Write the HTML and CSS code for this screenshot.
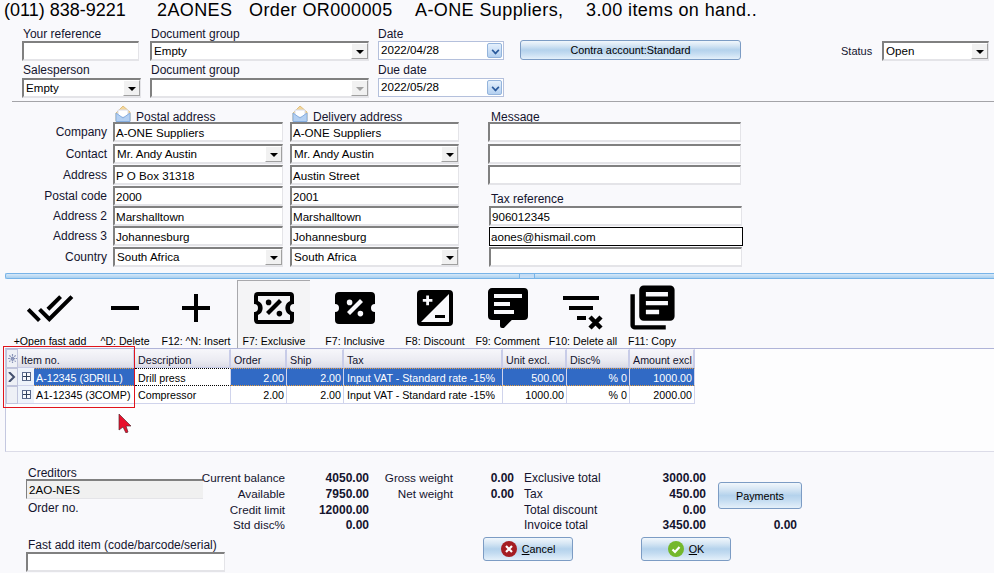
FILE: index.html
```html
<!DOCTYPE html>
<html lang="en">
<head>
<meta charset="utf-8">
<title>Order OR000005</title>
<link rel="stylesheet" href="styles.css">
</head>
<body>
<div class="page">
  <h1 class="title"><span class="phone">(011) 838-9221</span><span>2AONES</span><span>Order OR000005</span><span>A-ONE Suppliers,</span><span>3.00 items on hand..</span></h1>

  <section class="top-form">
    <div class="cell c-ref"><label>Your reference</label><div class="field"></div></div>
    <div class="cell c-group"><label>Document group</label><div class="field select"><span>Empty</span><i class="arrow"></i></div></div>
    <div class="cell c-date"><label>Date</label><div class="date"><span>2022/04/28</span><i class="date-btn"></i></div></div>
    <button class="btn contra">Contra account:Standard</button>
    <div class="status"><label>Status</label><div class="field select status-select"><span>Open</span><i class="arrow"></i></div></div>
    <div class="cell c-sales second"><label>Salesperson</label><div class="field select"><span>Empty</span><i class="arrow"></i></div></div>
    <div class="cell c-group second"><label>Document group</label><div class="field select"><span></span><i class="arrow off"></i></div></div>
    <div class="cell c-date second"><label>Due date</label><div class="date"><span>2022/05/28</span><i class="date-btn"></i></div></div>
  </section>

  <hr class="rule">

  <section class="address">
    <div></div>
    <div class="addr-head"><svg class="env" viewBox="0 0 16 17"><path d="M1 8 8 1l7 6v9H1z" fill="#f4d79c" stroke="#e0c080"/><path d="M3 5h10v7H3z" fill="#fff" stroke="#d8dcec"/><path d="M1 8l7 5 7-5v8.500H1z" fill="#b4d0f2" stroke="#86aee0"/></svg><span>Postal address</span></div>
    <div class="addr-head"><svg class="env" viewBox="0 0 16 17"><path d="M1 8 8 1l7 6v9H1z" fill="#f4d79c" stroke="#e0c080"/><path d="M3 5h10v7H3z" fill="#fff" stroke="#d8dcec"/><path d="M1 8l7 5 7-5v8.500H1z" fill="#b4d0f2" stroke="#86aee0"/></svg><span>Delivery address</span></div>
    <div class="addr-head msg-head"><span>Message</span></div>

    <label class="row-label">Company</label>
    <div class="field">A-ONE Suppliers</div><div class="field">A-ONE Suppliers</div><div class="field"></div>
    <label class="row-label">Contact</label>
    <div class="field select"><span>Mr. Andy Austin</span><i class="arrow"></i></div><div class="field select"><span>Mr. Andy Austin</span><i class="arrow"></i></div><div class="field"></div>
    <label class="row-label">Address</label>
    <div class="field">P O Box 31318</div><div class="field">Austin Street</div><div class="field"></div>
    <label class="row-label">Postal code</label>
    <div class="field">2000</div><div class="field">2001</div><div class="tax-label">Tax reference</div>
    <label class="row-label">Address 2</label>
    <div class="field">Marshalltown</div><div class="field">Marshalltown</div><div class="field wide">906012345</div>
    <label class="row-label">Address 3</label>
    <div class="field">Johannesburg</div><div class="field">Johannesburg</div><div class="field wide focus">aones@hismail.com</div>
    <label class="row-label">Country</label>
    <div class="field select"><span>South Africa</span><i class="arrow"></i></div><div class="field select"><span>South Africa</span><i class="arrow"></i></div><div class="field wide"></div>
  </section>

  <div class="splitter"><i class="grip"></i></div>

  <nav class="toolbar">
    <div class="tool"><svg viewBox="0 0 24 24"><path d="M.41 13.41 6 19l1.41-1.42L1.83 12M22.24 5.58 11.66 16.170 7.500 12l-1.430 1.410L11.660 19l12-12M18 7l-1.410-1.410-6.350 6.340 1.420 1.410z"/></svg><span>+Open fast add</span></div>
    <div class="tool"><svg viewBox="0 0 24 24"><path d="M19 13H5v-2h14z"/></svg><span>^D: Delete</span></div>
    <div class="tool"><svg viewBox="0 0 24 24"><path d="M19 13h-6v6h-2v-6H5v-2h6V5h2v6h6z"/></svg><span>F12: ^N: Insert</span></div>
    <div class="tool tool-active"><svg viewBox="0 0 24 24"><path fill-rule="evenodd" d="M4 4h16a2 2 0 0 1 2 2v4a2 2 0 0 0 0 4v4a2 2 0 0 1-2 2H4a2 2 0 0 1-2-2v-4a2 2 0 0 0 0-4V6a2 2 0 0 1 2-2zm0 2v2.500a3.800 3.800 0 0 1 0 7V18h16v-2.500a3.800 3.800 0 0 1 0-7V6z"/><path d="m14.500 7.500 1.500 1.500-6.500 6.500L8 14zM9.300 7.800a1.400 1.400 0 1 1 0 2.800 1.400 1.400 0 0 1 0-2.800zM14.700 13.400a1.400 1.400 0 1 1 0 2.800 1.400 1.400 0 0 1 0-2.800z"/></svg><span>F7: Exclusive</span></div>
    <div class="tool"><svg viewBox="0 0 24 24"><path fill-rule="evenodd" d="M4 4h16a2 2 0 0 1 2 2v4a2 2 0 0 0 0 4v4a2 2 0 0 1-2 2H4a2 2 0 0 1-2-2v-4a2 2 0 0 0 0-4V6a2 2 0 0 1 2-2zm10.500 3.500L8 14l1.500 1.500L16 9zM9.300 7.800a1.400 1.400 0 1 0 0 2.800 1.400 1.400 0 0 0 0-2.800zm5.400 5.600a1.400 1.400 0 1 0 0 2.800 1.400 1.400 0 0 0 0-2.800z"/></svg><span>F7: Inclusive</span></div>
    <div class="tool"><svg viewBox="0 0 24 24"><path fill-rule="evenodd" d="M19 3H5a2 2 0 0 0-2 2v14a2 2 0 0 0 2 2h14a2 2 0 0 0 2-2V5a2 2 0 0 0-2-2zm0 16H5L19 5zM7.600 5.800h1.400v1.700h1.700v1.400H9v1.700H7.600V8.900H5.900V7.500h1.700zM12 15.500h5v1.500h-5z"/></svg><span>F8: Discount</span></div>
    <div class="tool"><svg viewBox="0 0 24 24"><path d="M9 22a1 1 0 0 1-1-1v-3H4a2 2 0 0 1-2-2V4c0-1.110.9-2 2-2h16a2 2 0 0 1 2 2v12a2 2 0 0 1-2 2h-6.100l-3.700 3.710c-.2.190-.45.290-.7.290H9M5 5v2h14V5H5m0 4v2h8V9H5m0 4v2h10v-2H5z"/></svg><span>F9: Comment</span></div>
    <div class="tool"><svg viewBox="0 0 48 48"><path d="M4 12h36v4H4zM10 22h24v4H10zM18 32h9v4h-9z"/><path d="M31 33l11 11M42 33 31 44" fill="none" stroke="#000" stroke-width="4.500"/></svg><span>F10: Delete all</span></div>
    <div class="tool tool-copy"><svg viewBox="0 0 24 24"><path d="M4 6H2v14a2 2 0 0 0 2 2h14v-2H4V6m16-4H8a2 2 0 0 0-2 2v12a2 2 0 0 0 2 2h12a2 2 0 0 0 2-2V4a2 2 0 0 0-2-2m-1 9H9V9h10v2m-4 4H9v-2h6v2m4-8H9V5h10v2z"/></svg><span>F11: Copy</span></div>
  </nav>

  <section class="grid-wrap">
    <table class="grid">
      <colgroup>
        <col class="w-ind"><col class="w-exp"><col class="w-item"><col class="w-desc"><col class="w-order"><col class="w-ship"><col class="w-tax"><col class="w-unit"><col class="w-disc"><col class="w-amt">
      </colgroup>
      <thead>
        <tr><th class="ind"><svg class="star" viewBox="0 0 9 9"><path d="M4.500 0v9M0 4.500h9M1.300 1.300l6.400 6.400M7.700 1.300 1.300 7.700" stroke="#8a94b8" stroke-width="1.200" stroke-dasharray="2 .6"/></svg></th><th colspan="2">Item no.</th><th>Description</th><th>Order</th><th>Ship</th><th>Tax</th><th>Unit excl.</th><th>Disc%</th><th>Amount excl</th></tr>
      </thead>
      <tbody>
        <tr class="sel"><td class="ind"><svg class="chev" viewBox="0 0 8 10"><path d="M1 0l5 5-5 5" fill="none" stroke="#44506e" stroke-width="2"/></svg></td><td class="exp"><i class="plus"></i></td><td class="hi item">A-12345 (3DRILL)</td><td class="dot">Drill press</td><td class="hi num">2.00</td><td class="hi num">2.00</td><td class="hi">Input VAT - Standard rate -15%</td><td class="hi num">500.00</td><td class="hi num">% 0</td><td class="hi num">1000.00</td></tr>
        <tr><td class="ind"></td><td class="exp"><i class="plus"></i></td><td class="item">A1-12345 (3COMP)</td><td>Compressor</td><td class="num">2.00</td><td class="num">2.00</td><td>Input VAT - Standard rate -15%</td><td class="num">1000.00</td><td class="num">% 0</td><td class="num">2000.00</td></tr>
      </tbody>
    </table>
    <div class="red-box"></div>
    <svg class="cursor" viewBox="0 0 14 20"><path d="M1 1v16l4-3 3 6 2-1-2-6h5z" fill="#e8102c" stroke="#5a2a30" stroke-width=".7"/></svg>
  </section>

  <section class="bottom">
    <div class="bottom-left">
      <div class="b-label creditors">Creditors</div>
      <div class="field ro">2AO-NES</div>
      <div class="b-label order-no">Order no.</div>
      <div class="b-label fast-label">Fast add item (code/barcode/serial)</div>
      <div class="field fast"></div>
    </div>
    <div class="bottom-right">
      <div class="summary">
        <span class="k">Current balance</span><b>4050.00</b><span class="k">Gross weight</span><b>0.00</b><span class="l">Exclusive total</span><b>3000.00</b>
        <button class="btn pay">Payments</button>
        <span class="k">Available</span><b>7950.00</b><span class="k">Net weight</span><b>0.00</b><span class="l">Tax</span><b>450.00</b>
        <span class="k">Credit limit</span><b>12000.00</b><span></span><span></span><span class="l">Total discount</span><b>0.00</b>
        <span class="k">Std disc%</span><b>0.00</b><span></span><span></span><span class="l">Invoice total</span><b>3450.00</b><b class="extra">0.00</b>
      </div>
      <div class="actions">
        <button class="btn act"><svg viewBox="0 0 16 16"><circle cx="8" cy="8" r="8" fill="#a51d22"/><path d="M5 5l6 6M11 5l-6 6" stroke="#fff" stroke-width="2.200"/></svg><span><u>C</u>ancel</span></button>
        <button class="btn act"><svg viewBox="0 0 16 16"><circle cx="8" cy="8" r="8" fill="#74b82c"/><path d="M4.500 8.500l2.500 2.500 4.500-5" fill="none" stroke="#fff" stroke-width="2.200"/></svg><span><u>O</u>K</span></button>
      </div>
    </div>
  </section>
</div>
</body>
</html>
```
FILE: styles.css
```css
* { box-sizing: border-box; }
html, body { margin: 0; padding: 0; }
body { background: #f9f9fc; color: #000; font: 12px/14px "Liberation Sans", Arial, sans-serif; }
.page { width: 994px; height: 573px; overflow: hidden; position: relative; }
.title {
  margin: 0; height: 27px; padding: 0 0 0 4px; font: 400 18px/20px "Liberation Sans", Arial, sans-serif;
  display: grid; grid-template-columns: 153px 92px 166px 171px auto; letter-spacing: .4px; white-space: nowrap;
}
.phone { letter-spacing: 0; }

label { color: #14142e; display: block; }

.field {
  height: 20px; background: #fff; padding: 1px 0 0 1px; font-size: 11.6px; line-height: 15px; white-space: nowrap; overflow: hidden;
  border-style: solid; border-width: 2px 1px 2px 2px; border-color: #808080 #e4e4e8 #e4e4e8 #808080;
}
.select { display: flex; justify-content: space-between; padding: 0 0 0 2px; }
.arrow {
  flex: none; width: 17px; height: 16px; background: #f1f1f1; position: relative;
  border: 1px solid; border-color: #fff #a0a0a0 #a0a0a0 #fff;
}
.arrow::after {
  content: ""; position: absolute; left: 4px; top: 6px;
  border-style: solid; border-width: 4px 4px 0 4px; border-color: #000 transparent transparent transparent;
}
.arrow.off::after { border-top-color: #a0a0a0; }

.top-form { display: grid; grid-template-columns: 128px 228px 142px 321px auto; grid-template-rows: 37px 37px; padding-left: 22px; width: 994px; }
.cell label { height: 14px; padding-left: 1px; }
.second label { margin-top: -1px; height: 15px; }
.c-ref .field { width: 117px; }
.c-group .field { width: 219px; }
.c-sales .field { width: 119px; }
.c-date label { padding-left: 0; }
.date {
  display: flex; justify-content: space-between; width: 126px; height: 19px; padding: 0 1px 0 2px; align-items: flex-start;
  background: #fff; border: 1px solid #b4c0dc; font-size: 11.6px; line-height: 15px;
}
.date-btn {
  width: 15px; height: 15px; margin-top: 1px; border: 1px solid #94b4dc; border-radius: 2px; position: relative;
  background: linear-gradient(#e4f0fc, #b4d0f0);
}
.date-btn::after {
  content: ""; position: absolute; left: 3px; top: 3px; width: 5px; height: 5px; margin-left: 1px;
  border: solid #2a5a9c; border-width: 0 2px 2px 0; transform: scale(.8) rotate(45deg);
}
.btn {
  font: 10.8px/14px "Liberation Sans", Arial, sans-serif; color: #000; padding: 0; cursor: default;
  border: 1px solid #7c9cc4; border-radius: 3px;
  background: linear-gradient(#f1f7fc 0, #d6e6f4 25%, #b4d2ec 50%, #c4dcf1 70%, #e4f0fa 100%);
}
.contra { width: 221px; height: 20px; margin-top: 13px; }
.status { display: flex; padding-top: 14px; }
.status label { line-height: 20px; width: 41px; font-size: 11px; }
.status-select { width: 107px; }

.rule { border: 0; height: 1px; background: #a4a4a8; margin: 0 0 0 12px; }

.address {
  display: grid;
  grid-template-columns: 107px 170px 170px 253px; column-gap: 6px;
  grid-template-rows: 20px 22px 21px 21px 20px 20px 21px 20px;
}
.address > :nth-child(4n+3) { margin-left: 1px; }
.address > :nth-child(4n) { margin-left: 23px; width: 253px; }
.row-label { text-align: right; line-height: 21px; }
.addr-head { display: flex; align-items: flex-end; gap: 5px; padding-left: 2px; color: #14142e; line-height: 14px; }
.addr-head span { margin-bottom: -2px; }
.msg-head { padding-left: 3px; }
.env { width: 16px; height: 17px; }
.tax-label { color: #14142e; align-self: end; padding-left: 3px; line-height: 14px; }
.address > .wide { margin-left: 24px; }
.focus { border: 1px solid #000; padding: 1px 0 0 1px; margin-top: 1px; height: 19px; width: 254px !important; }

.splitter {
  height: 6px; margin: 6px 0 0 5px; position: relative; border-radius: 2px 0 0 2px;
  border-top: 1px solid #78b4e8; border-bottom: 1px solid #78b4e8; border-left: 1px solid #78b4e8;
  background: linear-gradient(#d6e8f8, #a8d0f0);
}
.grip { position: absolute; left: 513px; top: -1px; width: 16px; height: 6px; border: 1px solid #78b4e8; background: #c4dcf4; }

.toolbar {
  display: grid; height: 69px; padding: 1px 0 0 12px; font-size: 10.6px;
  grid-template-columns: 76px 74px 75px 73px 90px 70px 75px 76px 62px;
}
.tool { display: flex; flex-direction: column; align-items: center; position: relative; height: 68px; }
.tool svg { width: 48px; height: 48px; margin-top: 4px; flex: none; }
.tool span { white-space: nowrap; margin-top: 2px; line-height: 14px; }
.tool:nth-child(3) { width: 68px; }
.tool-active { background: #f4f4f6; border-top: 1px solid #a8a8ac; border-left: 1px solid #a8a8ac; }
.tool-active svg { margin-top: 3px; }
.tool-copy svg { width: 53px; height: 53px; margin: 1px 0 0; }
.tool-copy span { margin-top: 0; }

.grid-wrap { position: relative; margin-left: 5px; height: 104px; border-top: 1px solid #b0b4d8; border-left: 1px solid #c4c8e0; border-bottom: 1px solid #dcdce8; background: #fdfdfe; font-size: 10.7px; }
.grid { border-collapse: separate; border-spacing: 0; table-layout: fixed; width: 689px; }
.w-ind { width: 12px; } .w-exp { width: 16px; } .w-item { width: 101px; } .w-desc { width: 96px; }
.w-order { width: 56px; } .w-ship { width: 57px; } .w-tax { width: 159px; } .w-unit { width: 64px; }
.w-disc { width: 63px; } .w-amt { width: 65px; }
.grid th {
  height: 19px; padding: 2px 0 0 3px; text-align: left; font-weight: 400; color: #14142e; white-space: nowrap; overflow: hidden;
  background: linear-gradient(#f6f6fa, #ebebf2 60%, #dcdce6);
  border-right: 2px solid #c8cce8; border-bottom: 1px solid #c8cce8; border-top: 1px solid #f4f4fa;
}
.grid td { height: 18px; padding: 1px 2px 0 3px; white-space: nowrap; overflow: hidden; border-right: 1px solid #d0d4ec; border-bottom: 1px solid #d0d4ec; background: #fff; }
.grid .ind { padding: 0; background: #eef0f6; border: 1px solid #c0c4dc; text-align: center; }
.star { width: 9px; height: 9px; display: block; margin: 0 auto; }
.grid .exp { padding: 0; background: #eef3fb; border-right: 0; }
.grid .item { padding-left: 2px; }
.grid .num { text-align: right; }
.plus { display: block; width: 9px; height: 9px; margin-left: 4px; border: 1px solid #5a6a8c; background: linear-gradient(90deg, transparent 3px, #30405c 3px, #30405c 4px, transparent 4px), linear-gradient(transparent 3px, #30405c 3px, #30405c 4px, transparent 4px), #f6f8fc; }
.chev { width: 8px; height: 10px; display: block; margin: 0 auto; }
.grid .hi { background: #316ac5; color: #fff; border-top: 1px dotted #e8a040; border-bottom: 1px dotted #e8a040; }
.grid .dot { border-top: 1px dotted #000; border-bottom: 1px dotted #000; }
.red-box { position: absolute; left: -3px; top: -3px; width: 132px; height: 62px; border: 1px solid #e0141c; pointer-events: none; }
.cursor { position: absolute; left: 112px; top: 64px; width: 14px; height: 20px; }

.bottom { display: flex; padding: 16px 0 0 26px; }
.bottom-left { width: 177px; flex: none; }
.b-label { line-height: 14px; padding-left: 2px; color: #14142e; white-space: nowrap; }
.creditors { height: 13px; margin-top: -2px; }
.ro { background: #f0f0f0; padding: 1px 0 0 2px; height: 20px; border-width: 2px 0 1px 1px; }
.order-no { margin-top: 2px; height: 37px; }
.fast-label { height: 14px; }
.fast { width: 199px; }
.bottom-right { flex: none; padding-top: 2px; }
.summary { display: grid; grid-template-columns: 82px 84px 84px 61px 106px 86px 96px; grid-template-rows: 16px 16px 15px 16px; line-height: 16px; }
.summary b { text-align: right; font-weight: 700; color: #14142e; }
.k { justify-self: end; white-space: nowrap; color: #14142e; font-size: 11.7px; }
.l { padding-left: 10px; white-space: nowrap; color: #14142e; }
.pay { grid-column: 7; grid-row: 1 / 4; justify-self: end; width: 84px; height: 27px; margin-top: 12px; }
.extra { grid-column: 7; padding-right: 5px; }
.actions { display: flex; gap: 68px; padding: 4px 0 0 280px; }
.act { width: 90px; height: 24px; display: flex; align-items: center; justify-content: center; gap: 5px; }
.act svg { width: 16px; height: 16px; }
```
